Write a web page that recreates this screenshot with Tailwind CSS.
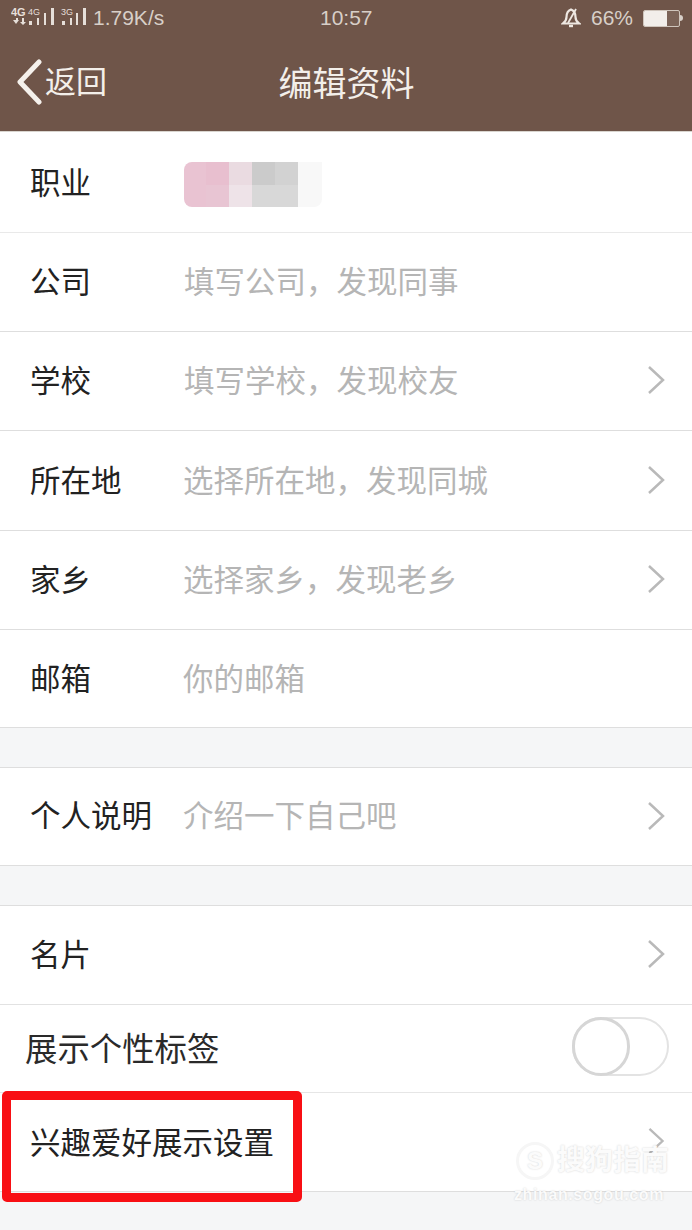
<!DOCTYPE html>
<html lang="zh-CN">
<head>
    <meta charset="UTF-8">
    <meta name="viewport" content="width=device-width, initial-scale=1.0">
    <title>编辑资料</title>
    <script src="https://cdn.jsdelivr.net/npm/@tailwindcss/browser@4"></script>
</head>
<body class="bg-[#f5f6f7] font-['Liberation_Sans','Noto_Sans_CJK_SC',sans-serif] overflow-hidden">
<div class="relative w-[692px] h-[1230px] overflow-hidden">

    <!-- header -->
    <header class="h-[132px] bg-[#6f5549] border-b border-[#d9d5cf] text-[#f3efea]">
        <div class="relative h-[36px] flex items-center justify-between pl-[11px] pr-[9px] text-[21px] text-[#d8cfc8]">
            <div class="flex items-center gap-[5px]">
                <svg width="77" height="22" viewBox="0 0 77 22" fill="#e6dfd9">
                    <text x="0" y="9" font-size="11" font-weight="700" font-family="Liberation Sans">4G</text>
                    <text x="17" y="8" font-size="9" font-family="Liberation Sans">4G</text>
                    <text x="50" y="8" font-size="9" font-family="Liberation Sans">3G</text>
                    <path d="M2 13h3v-2h2v2h1l-3 4zM9 15h2v-4h2v4h2l-3 3z"/>
                    <rect x="18" y="14" width="3" height="4"/><rect x="26" y="11" width="2" height="7"/><rect x="33" y="6" width="2" height="12"/><rect x="40" y="1" width="3" height="17"/>
                    <rect x="51" y="14" width="3" height="4"/><rect x="59" y="11" width="2" height="7"/><rect x="65" y="6" width="2" height="12"/><rect x="72" y="1" width="3" height="17"/>
                </svg>
                <span>1.79K/s</span>
            </div>
            <span class="absolute left-[320px] top-[2px]">10:57</span>
            <div class="flex items-center">
                <svg width="20" height="22" viewBox="0 0 20 22" fill="none" stroke="#eee8e2" stroke-width="2.200" class="mr-[10px]">
                    <path d="M10 2.500C6 4 5.500 7 5.500 10 5.500 13 4 15 2 16.500H18C16 15 14.500 13 14.500 10 14.500 7 14 4 10 2.500Z"/>
                    <path d="M15 2L7 16" stroke-width="1.800"/>
                    <path d="M8 19h4" stroke-width="2.400"/>
                </svg>
                <span>66%</span>
                <div class="ml-[10px] w-[37px] h-[17px] border border-[#cfc5bc] rounded-[2px] bg-[#7b6357] overflow-hidden">
                    <div class="w-[23px] h-full bg-[#f2eeea]"></div>
                </div>
                <div class="w-[3px] h-[6px] bg-[#d8cfc8] rounded-r-sm"></div>
            </div>
        </div>
        <div class="relative h-[95px] flex items-center justify-center pl-[1px] pt-[1px]">
            <div class="absolute left-[16px] top-[23px] flex items-center">
                <svg width="28" height="46" viewBox="0 0 28 46" fill="none" stroke="#f5f1ec" stroke-width="5" stroke-linecap="round" stroke-linejoin="round">
                    <path d="M23 3L4 23l19 20"/>
                </svg>
                <span class="text-[31px] leading-[40px] ml-[1px] mt-[2px]">返回</span>
            </div>
            <h1 class="text-[34px] leading-[44px] font-normal">编辑资料</h1>
        </div>
    </header>

    <main class="text-[30.500px] text-[#222]">
        <section class="bg-white">
            <div class="h-[101px] flex items-center pl-[30px] border-b border-[#e9e9e9]">
                <span class="w-[154px] mt-[4px]">职业</span>
                <div class="grid grid-cols-[22px_23px_23px_23px_23px_24px] grid-rows-[23px_22px] mt-[4px]">
                    <div class="bg-[#e9c3d2] rounded-tl-[8px]"></div><div class="bg-[#e8bfcf]"></div><div class="bg-[#eadbe1]"></div><div class="bg-[#cbcbcb]"></div><div class="bg-[#d2d2d2]"></div><div class="bg-[#f8f8f8]"></div>
                    <div class="bg-[#e9c3d2] rounded-bl-[8px]"></div><div class="bg-[#e8c5d3]"></div><div class="bg-[#eee3e8]"></div><div class="bg-[#d8d8d8]"></div><div class="bg-[#d8d8d8]"></div><div class="bg-[#f8f8f8] rounded-br-[8px]"></div>
                </div>
            </div>
            <div class="h-[99px] flex items-center pl-[30px] pr-[27px] border-b border-[#dedede]">
                <span class="w-[154px] mt-[2px]">公司</span>
                <span class="text-[#b5b5b5] mt-[2px]">填写公司，发现同事</span>
            </div>
            <div class="h-[99px] flex items-center pl-[30px] pr-[27px] border-b border-[#dedede]">
                <span class="w-[154px] mt-[2px]">学校</span>
                <span class="text-[#b5b5b5] flex-1 mt-[2px]">填写学校，发现校友</span>
                <svg width="18" height="30" viewBox="0 0 18 30" fill="none" stroke="#b9b9b9" stroke-width="2.500" class="-mt-[2px]"><path d="M2 2l14 13L2 28"/></svg>
            </div>
            <div class="h-[100px] flex items-center pl-[30px] pr-[27px] border-b border-[#dedede]">
                <span class="w-[153px] mt-[2px]">所在地</span>
                <span class="text-[#b5b5b5] flex-1 mt-[2px]">选择所在地，发现同城</span>
                <svg width="18" height="30" viewBox="0 0 18 30" fill="none" stroke="#b9b9b9" stroke-width="2.500" class="-mt-[2px]"><path d="M2 2l14 13L2 28"/></svg>
            </div>
            <div class="h-[99px] flex items-center pl-[30px] pr-[27px] border-b border-[#dedede]">
                <span class="w-[153px] mt-[1px]">家乡</span>
                <span class="text-[#b5b5b5] flex-1 mt-[1px]">选择家乡，发现老乡</span>
                <svg width="18" height="30" viewBox="0 0 18 30" fill="none" stroke="#b9b9b9" stroke-width="2.500" class="-mt-[2px]"><path d="M2 2l14 13L2 28"/></svg>
            </div>
            <div class="h-[98px] flex items-center pl-[30px] pr-[27px] border-b border-[#dedede]">
                <span class="w-[153px] mt-[3px]">邮箱</span>
                <span class="text-[#b5b5b5] mt-[3px]">你的邮箱</span>
            </div>
        </section>

        <section class="mt-[39px] bg-white border-t border-[#dedede]">
            <div class="h-[98px] flex items-center pl-[30px] pr-[27px] border-b border-[#dedede]">
                <span class="w-[153px] mt-[1px]">个人说明</span>
                <span class="text-[#b5b5b5] flex-1 mt-[1px]">介绍一下自己吧</span>
                <svg width="18" height="30" viewBox="0 0 18 30" fill="none" stroke="#b9b9b9" stroke-width="2.500" class="-mt-[1px]"><path d="M2 2l14 13L2 28"/></svg>
            </div>
        </section>

        <section class="mt-[39px] bg-white border-t border-[#dedede]">
            <div class="h-[99px] flex items-center justify-between pl-[30px] pr-[27px] border-b border-[#e2e2e2]">
                <span class="mt-[1px]">名片</span>
                <svg width="18" height="30" viewBox="0 0 18 30" fill="none" stroke="#b9b9b9" stroke-width="2.500" class="-mt-[2px]"><path d="M2 2l14 13L2 28"/></svg>
            </div>
            <div class="h-[88px] flex items-center justify-between pl-[25px] pr-[23px] border-b border-[#e6e6e6] text-[32.400px]">
                <span class="text-[#2a2a2a] mt-[3px]">展示个性标签</span>
                <div class="w-[97px] h-[59px] -mt-[4px] rounded-full border-[2px] border-[#e3e3e3] bg-white blur-[0.5px]">
                    <div class="-ml-[2px] -mt-[2px] w-[58px] h-[59px] rounded-full border-[3px] border-[#d6d6d6] bg-white"></div>
                </div>
            </div>
            <div class="h-[99px] flex items-center justify-between pl-[30px] pr-[27px] border-b border-[#dedede]">
                <span class="mt-[3px]">兴趣爱好展示设置</span>
                <svg width="18" height="28" viewBox="0 0 18 30" fill="none" stroke="#b9b9b9" stroke-width="2.500" class="-mt-[2px]"><path d="M2 2l14 13L2 28"/></svg>
            </div>
        </section>
    </main>

    <!-- red annotation over the last row -->
    <div class="absolute left-[2px] top-[1091px] w-[300px] h-[111px] border-[9px] border-[#f80f14] rounded-[5px]"></div>

    <!-- watermark -->
    <div class="absolute left-[514px] top-[1142px] w-[160px] text-[#fbfbfb] [text-shadow:0_0_2px_rgba(0,0,0,0.18)]">
        <div class="flex items-center pl-[2px]">
            <div class="w-[38px] h-[38px] rounded-full border-[3px] border-[#f6f6f6] flex items-center justify-center text-[24px] leading-none font-bold">S</div>
            <span class="ml-[3px] text-[28px] leading-[38px] font-bold">搜狗指南</span>
        </div>
        <div class="text-[16px] leading-[18px] mt-[6px] font-bold tracking-[0.6px]">zhinan.sogou.com</div>
    </div>
</div>
</body>
</html>
